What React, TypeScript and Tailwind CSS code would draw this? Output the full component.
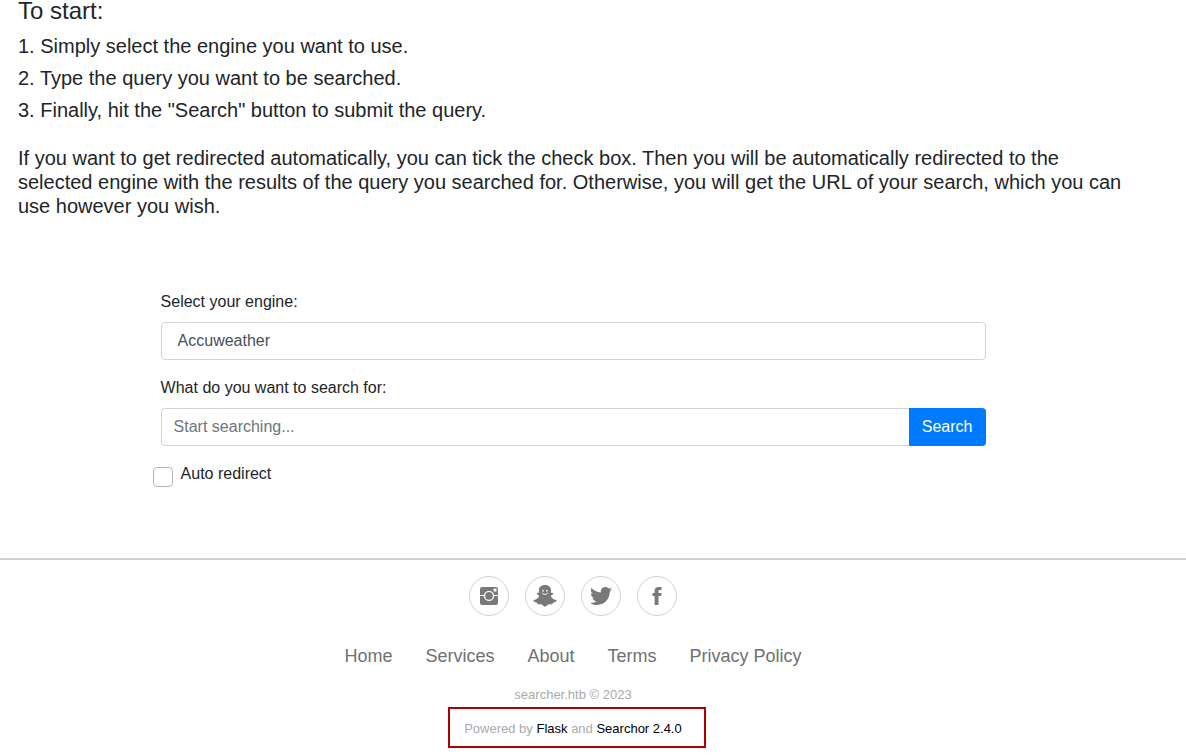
import type { ReactNode } from 'react';

function Social({ label, children }: { label: string; children: ReactNode }) {
  return (
    <a
      aria-label={label}
      className="flex size-10 items-center justify-center rounded-full border border-[#d0d0d0] text-[#77797b]"
    >
      <svg viewBox="0 0 512 512" className="size-6" fill="currentColor">
        {children}
      </svg>
    </a>
  );
}

const steps = [
  '1. Simply select the engine you want to use.',
  '2. Type the query you want to be searched.',
  '3. Finally, hit the "Search" button to submit the query.',
];

const links = ['Home', 'Services', 'About', 'Terms', 'Privacy Policy'];

export default function App() {
  return (
    <div className="h-[756px] w-[1186px] overflow-hidden bg-white font-['Liberation_Sans',Arial,sans-serif] text-base text-[#212529]">
      <section className="flow-root h-[558px] pl-[18px]">
        <h4 className="mb-[13px] text-2xl leading-[21px]">To start:</h4>
        {steps.map((step) => (
          <h5 key={step} className="mb-2 text-xl leading-6">{step}</h5>
        ))}
        <p className="mt-6 w-[1110px] text-xl leading-6">
          If you want to get redirected automatically, you can tick the check box. Then you will be automatically redirected to the selected engine with the results of the query you searched for. Otherwise, you will get the URL of your search, which you can use however you wish.
        </p>
        <form className="mt-[72px] ml-[142.6px] w-[825px]">
          <label className="mb-2 block leading-6">Select your engine:</label>
          <div className="mb-4 flex h-[38px] items-center rounded border border-[#ced4da] px-4 pb-px text-[#495057]">
            Accuweather
          </div>
          <label className="mb-2 block leading-6">What do you want to search for:</label>
          <div className="mb-4 flex h-[38px]">
            <div className="flex flex-1 items-center rounded-l border border-r-0 border-[#ced4da] px-3 pb-px text-[#6c757d]">
              Start searching...
            </div>
            <button type="button" className="w-[77px] rounded-r bg-[#007bff] pb-px text-white">Search</button>
          </div>
          <label className="-ml-2 flex items-start gap-2 leading-6">
            <input type="checkbox" className="mt-[5px] size-5 appearance-none rounded border border-[#b5b5b5] bg-white" />
            Auto redirect
          </label>
        </form>
      </section>
      <footer className="border-t-2 border-[#d1d1d1] pt-4 pr-10">
        <div className="-ml-px flex justify-center gap-4 pl-px">
          <Social label="Instagram">
            <rect x="64" y="64" width="384" height="384" rx="44" />
            <path d="M64 246h90M358 246h90" stroke="white" strokeWidth="24" />
            <circle cx="256" cy="254" r="96" fill="none" stroke="white" strokeWidth="28" />
            <rect x="352" y="94" width="66" height="66" rx="14" fill="white" />
          </Social>
          <Social label="Snapchat">
            <path d="M256 22c-84 0-130 48-130 118 0 20 2 30 3 46-18 0-44-2-48 17-4 22 43 33 48 53 5 25-48 71-106 84-14 3-20 17-11 27 15 18 49 20 72 31 11 10 6 30 23 34 23 5 50-4 76 7 27 12 42 45 73 45s46-33 73-45c26-11 53-2 76-7 17-4 12-24 23-34 23-11 57-13 72-31 9-10 3-24-11-27-58-13-111-59-106-84 5-20 52-31 48-53-4-19-30-17-48-17 1-16 3-26 3-46 0-70-46-118-130-118z" />
            <ellipse cx="215" cy="145" rx="16" ry="20" fill="white" />
            <ellipse cx="297" cy="145" rx="16" ry="20" fill="white" />
            <path d="M188 188c35 45 101 45 136 0" fill="none" stroke="white" strokeWidth="20" />
          </Social>
          <Social label="Twitter">
            <path d="M492,109.5c-17.4,7.7-36,12.9-55.6,15.3c20-12,35.4-31,42.6-53.6c-18.7,11.1-39.4,19.2-61.5,23.5C399.8,75.9,374.6,64,346.8,64c-53.5,0-96.8,43.4-96.8,96.9c0,7.6,0.8,15,2.5,22.1C172,179,100.6,140.4,52.9,81.7c-8.3,14.3-13.1,31-13.1,48.7c0,33.6,17.1,63.3,43.1,80.7C67,210.7,52,206.3,39,199c0,0.4,0,0.8,0,1.2c0,47,33.4,86.1,77.7,95c-8.1,2.2-16.7,3.4-25.5,3.4c-6.2,0-12.3-0.6-18.2-1.8c12.3,38.5,48.1,66.5,90.5,67.3c-33.1,26-74.9,41.5-120.3,41.5c-7.8,0-15.5-0.5-23.1-1.4C62.9,432,113.8,448,168.4,448C346.6,448,444,300.3,444,172.2c0-4.2-0.1-8.4-0.3-12.5C462.6,146,479,128.9,492,109.5z" />
          </Social>
          <Social label="Facebook">
            <path d="M288,192v-38.1c0-17.2,3.8-25.9,30.5-25.9H352V64h-55.9c-68.5,0-91.1,31.4-91.1,85.3V192h-45v64h45v192h83V256h56.4l7.6-64H288z" />
          </Social>
        </div>
        <nav className="mt-[27px] flex justify-center gap-[33px] text-lg leading-[27px] text-[#6f7072]">
          {links.map((link) => <a key={link}>{link}</a>)}
        </nav>
        <p className="mt-[15px] text-center text-[13px] leading-5 text-[#aaaaaa]">searcher.htb © 2023</p>
        <div className="mt-[2px] ml-[448px] flex h-[41px] w-[258px] items-center border-2 border-[#b00000] pt-[2px] pl-[14.2px] text-[13px] text-[#aaaaaa]">
          <p>Powered by <a className="text-black">Flask</a> and <a className="text-black">Searchor 2.4.0</a></p>
        </div>
      </footer>
    </div>
  );
}
